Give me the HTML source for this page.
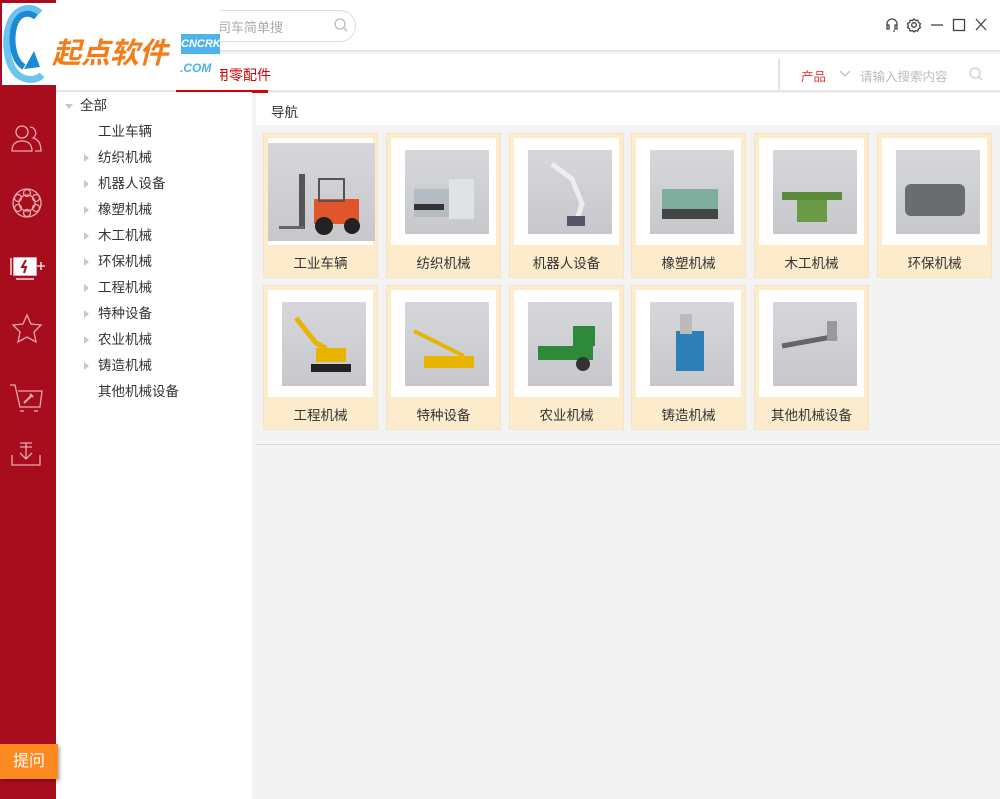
<!DOCTYPE html>
<html><head><meta charset="utf-8"><style>
*{margin:0;padding:0;box-sizing:border-box}
body{width:1000px;height:799px;position:relative;overflow:hidden;background:#f3f3f3;font-family:"Liberation Sans","Noto Sans CJK SC",sans-serif;font-size:13px;color:#333}
.abs{position:absolute}
#side{left:0;top:0;width:56px;height:799px;background:#a80d1e}
#top{left:56px;top:0;width:944px;height:52px;background:#fff;border-bottom:2px solid #e6e6e6}
#tabs{left:56px;top:54px;width:944px;height:38px;background:#fff;border-bottom:2px solid #e6e6e6}
#tree{left:56px;top:92px;width:196px;height:707px;background:#fff}
.ti{position:absolute;left:42px;font-size:13.5px;color:#333;line-height:20px}
.ar{position:absolute;left:28px;width:0;height:0;border-top:4px solid transparent;border-bottom:4px solid transparent;border-left:5px solid #c8c8c8;margin-top:6px}
.tile{position:absolute;width:115px;height:145px;background:#fdeccc;border:1px solid #f0e3c6}
.tile .img{position:absolute;left:4px;top:4px;width:105px;height:107px;background:#fff}
.tile .pic{position:absolute;left:14px;top:12px;width:84px;height:84px;background:linear-gradient(#d6d7da,#c7c8cb)}
.tile .lb{position:absolute;left:0;top:115px;width:113px;text-align:center;font-size:13.5px;line-height:30px;color:#333}
</style></head><body>
<div id="side" class="abs"></div>
<div id="top" class="abs"></div>
<div class="abs" style="left:200px;top:10px;width:156px;height:32px;border:1px solid #ddd;border-radius:16px;background:#fff"></div>
<div class="abs" style="left:218px;top:17px;color:#aaa;font-size:13px">司车简单搜</div>
<svg class="abs" style="left:333px;top:17px" width="16" height="16"><circle cx="7" cy="7" r="5" fill="none" stroke="#bbb" stroke-width="1.3"/><line x1="11" y1="11" x2="14" y2="14" stroke="#bbb" stroke-width="1.3"/></svg>
<svg class="abs" style="left:884px;top:16px" width="110" height="20" fill="none" stroke="#444" stroke-width="1.3">
<path d="M3 10v-2a5 5 0 0 1 10 0v2M3 10v3h2v-4H3M13 10v3h-2v-4h2M11 15h-2"/>
<circle cx="30" cy="9" r="2.3"/><path d="M30 3l1.5 1.6 2.3-.4.6 2.2 2 1.2-.8 2 .8 2-2 1.2-.6 2.2-2.3-.4L30 16l-1.5-1.4-2.3.4-.6-2.2-2-1.2.8-2-.8-2 2-1.2.6-2.2 2.3.4z"/>
<line x1="47" y1="9" x2="59" y2="9"/><rect x="69.5" y="3.5" width="11" height="11"/><path d="M92 3l10 11M102 3L92 14"/></svg>
<div id="tabs" class="abs"></div>
<div class="abs" style="left:176px;top:90px;width:92px;height:3px;background:#d50000"></div>
<div class="abs" style="left:215px;top:65px;color:#d50000;font-size:14px">用零配件</div>
<div class="abs" style="left:778px;top:59px;width:2px;height:30px;background:#e2e2e2"></div>
<div class="abs" style="left:801px;top:66px;color:#e53935;font-size:12.5px">产品</div>
<svg class="abs" style="left:839px;top:70px" width="12" height="8"><path d="M1 1l5 5 5-5" fill="none" stroke="#bbb" stroke-width="1.2"/></svg>
<div class="abs" style="left:860px;top:66px;color:#bbb;font-size:12.5px">请输入搜索内容</div>
<svg class="abs" style="left:968px;top:66px" width="16" height="16"><circle cx="7" cy="7" r="5" fill="none" stroke="#ccc" stroke-width="1.3"/><line x1="11" y1="11" x2="14" y2="14" stroke="#ccc" stroke-width="1.3"/></svg>
<div id="tree" class="abs">
<div class="abs" style="left:9px;top:12px;width:0;height:0;border-left:4px solid transparent;border-right:4px solid transparent;border-top:5px solid #c8c8c8"></div>
<div class="ti" style="left:24px;top:4px">全部</div>
<div class="ti" style="top:30px">工业车辆</div>
<div class="ar" style="top:56px"></div><div class="ti" style="top:56px">纺织机械</div>
<div class="ar" style="top:82px"></div><div class="ti" style="top:82px">机器人设备</div>
<div class="ar" style="top:108px"></div><div class="ti" style="top:108px">橡塑机械</div>
<div class="ar" style="top:134px"></div><div class="ti" style="top:134px">木工机械</div>
<div class="ar" style="top:160px"></div><div class="ti" style="top:160px">环保机械</div>
<div class="ar" style="top:186px"></div><div class="ti" style="top:186px">工程机械</div>
<div class="ar" style="top:212px"></div><div class="ti" style="top:212px">特种设备</div>
<div class="ar" style="top:238px"></div><div class="ti" style="top:238px">农业机械</div>
<div class="ar" style="top:264px"></div><div class="ti" style="top:264px">铸造机械</div>
<div class="ti" style="top:290px">其他机械设备</div>
</div>
<div class="abs" style="left:256px;top:93px;width:744px;height:32px;background:#fff"></div>
<div class="abs" style="left:271px;top:101px;font-size:13.5px;color:#333">导航</div>
<div class="abs" style="left:256px;top:444px;width:744px;height:1px;background:#d8d8d8"></div>

<div class="tile" style="left:263px;top:133px"><div class="img"><div class="pic" style="left:0;top:5px;width:107px;height:98px"></div></div><svg class="abs" style="left:10px;top:30px" width="95" height="80"><rect x="25" y="10" width="6" height="55" fill="#555"/><rect x="40" y="35" width="45" height="25" fill="#e0562a"/><rect x="45" y="15" width="25" height="22" fill="none" stroke="#555" stroke-width="2"/><circle cx="50" cy="62" r="9" fill="#222"/><circle cx="78" cy="62" r="8" fill="#222"/><rect x="5" y="62" width="25" height="3" fill="#666"/></svg><div class="lb">工业车辆</div></div>
<div class="tile" style="left:386px;top:133px"><div class="img"><div class="pic"></div></div><svg class="abs" style="left:22px;top:40px" width="70" height="60"><rect x="5" y="15" width="60" height="28" fill="#b3bcc0"/><rect x="40" y="5" width="25" height="40" fill="#dfe3e5"/><rect x="5" y="30" width="30" height="6" fill="#333"/></svg><div class="lb">纺织机械</div></div>
<div class="tile" style="left:509px;top:133px"><div class="img"><div class="pic"></div></div><svg class="abs" style="left:22px;top:20px" width="70" height="80"><path d="M20 10l20 15 10 25-5 15" fill="none" stroke="#eee" stroke-width="5"/><rect x="35" y="62" width="18" height="10" fill="#556"/></svg><div class="lb">机器人设备</div></div>
<div class="tile" style="left:631px;top:133px"><div class="img"><div class="pic"></div></div><svg class="abs" style="left:22px;top:40px" width="70" height="60"><rect x="8" y="15" width="56" height="25" fill="#7fae9e"/><rect x="8" y="35" width="56" height="10" fill="#444"/></svg><div class="lb">橡塑机械</div></div>
<div class="tile" style="left:754px;top:133px"><div class="img"><div class="pic"></div></div><svg class="abs" style="left:22px;top:40px" width="70" height="60"><rect x="5" y="18" width="60" height="8" fill="#5a8a3a"/><rect x="20" y="26" width="30" height="22" fill="#6a9a45"/></svg><div class="lb">木工机械</div></div>
<div class="tile" style="left:877px;top:133px"><div class="img"><div class="pic"></div></div><svg class="abs" style="left:22px;top:40px" width="70" height="60"><rect x="5" y="10" width="60" height="32" rx="6" fill="#6a6d70"/></svg><div class="lb">环保机械</div></div>

<div class="tile" style="left:263px;top:285px"><div class="img"><div class="pic"></div></div><svg class="abs" style="left:22px;top:22px" width="70" height="75"><path d="M10 10l20 25 10 5" fill="none" stroke="#e8b400" stroke-width="5"/><rect x="30" y="40" width="30" height="14" fill="#e8b400"/><rect x="25" y="56" width="40" height="8" fill="#222"/></svg><div class="lb">工程机械</div></div>
<div class="tile" style="left:386px;top:285px"><div class="img"><div class="pic"></div></div><svg class="abs" style="left:22px;top:30px" width="70" height="65"><path d="M5 15l50 25" stroke="#e8b400" stroke-width="4"/><rect x="15" y="40" width="50" height="12" fill="#e8b400"/></svg><div class="lb">特种设备</div></div>
<div class="tile" style="left:509px;top:285px"><div class="img"><div class="pic"></div></div><svg class="abs" style="left:18px;top:30px" width="80" height="65"><rect x="10" y="30" width="55" height="14" fill="#2e8a3a"/><rect x="45" y="10" width="22" height="20" fill="#2e8a3a"/><circle cx="55" cy="48" r="7" fill="#333"/></svg><div class="lb">农业机械</div></div>
<div class="tile" style="left:631px;top:285px"><div class="img"><div class="pic"></div></div><svg class="abs" style="left:22px;top:20px" width="70" height="75"><rect x="22" y="25" width="28" height="40" fill="#2d7fb5"/><rect x="26" y="8" width="12" height="20" fill="#bbb"/></svg><div class="lb">铸造机械</div></div>
<div class="tile" style="left:754px;top:285px"><div class="img"><div class="pic"></div></div><svg class="abs" style="left:22px;top:30px" width="70" height="65"><path d="M5 30l55-10" stroke="#666" stroke-width="5"/><rect x="50" y="5" width="10" height="20" fill="#999"/></svg><div class="lb">其他机械设备</div></div>

<svg class="abs" style="left:10px;top:123px" width="36" height="360" fill="none" stroke="#e9a9b0" stroke-width="1.3">
<circle cx="12" cy="9" r="6"/><path d="M2 28c0-7 4-10 10-10s10 3 10 10z"/><path d="M20 4a6 6 0 0 1 3 11c4 1 8 4 8 13h-6"/>
<circle cx="17" cy="80" r="14"/><circle cx="17" cy="80" r="8"/>
<g><circle cx="17" cy="70" r="3.5"/><circle cx="26" cy="75" r="3.5"/><circle cx="26" cy="85" r="3.5"/><circle cx="17" cy="90" r="3.5"/><circle cx="8" cy="85" r="3.5"/><circle cx="8" cy="75" r="3.5"/></g>
<rect x="4" y="135" width="22" height="17" fill="#fff" stroke="#fff"/><path d="M16 137l-4 7h4l-2 6" stroke="#a80d1e" stroke-width="2"/><path d="M1 135v17M27 143h8M31 139v8M6 156h18" stroke="#fff"/>
<path d="M17 192l4 9 10 1-7 7 2 10-9-5-9 5 2-10-7-7 10-1z"/>
<path d="M0 262h5l5 22h20l2-16H8M10 288h4M24 288h4"/><path d="M14 280l8-8m-2-1 3 3" stroke-width="2"/>
<path d="M2 332v10h28v-10M16 320v16M10 330l6 6 6-6M10 324h12M10 320h12"/>
</svg>
<div class="abs" style="left:0;top:744px;width:58px;height:35px;background:#fd8a21;color:#fff;font-size:16px;line-height:35px;text-align:center;box-shadow:2px 2px 3px rgba(0,0,0,.3)">提问</div>

<div class="abs" style="left:2px;top:3px;width:218px;height:82px;background:#fff"></div>
<svg class="abs" style="left:2px;top:3px" width="46" height="82"><path d="M38 10C30 2 14 4 8 20 2 36 4 62 16 72 24 78 34 78 40 72" fill="none" stroke="#6cc3f0" stroke-width="7"/><path d="M34 14C26 8 16 10 12 24 8 40 12 58 22 64" fill="none" stroke="#1a8ad4" stroke-width="6"/><path d="M22 66l10-18 6 16z" fill="#1a8ad4"/></svg>
<div class="abs" style="left:52px;top:36px;font-size:29px;font-weight:bold;color:#f47d1b;font-style:italic;letter-spacing:0;line-height:36px">起点软件</div>
<div class="abs" style="left:181px;top:34px;width:39px;height:20px;background:#4db3ea;color:#fff;font-size:11px;font-weight:bold;line-height:20px;text-align:center;font-style:italic">CNCRK</div>
<div class="abs" style="left:180px;top:61px;color:#4db3ea;font-size:12px;font-weight:bold;font-style:italic">.COM</div>
</body></html>
